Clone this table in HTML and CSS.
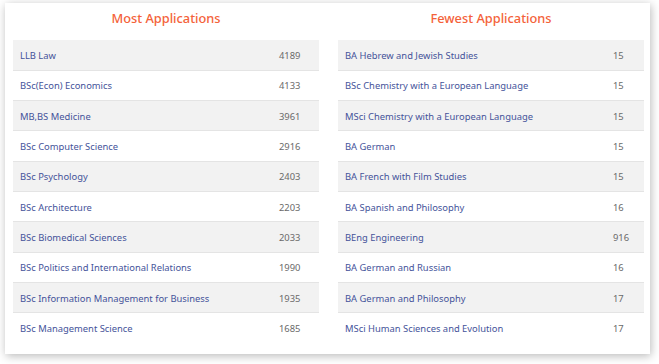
FILE: index.html
```html
<!DOCTYPE html>
<html lang="en">
<head>
    <meta charset="UTF-8">
    <meta name="viewport" content="width=device-width, initial-scale=1.0">
    <title>Applications</title>
    <link rel="stylesheet" href="styles.css">
</head>
<body>
    <div class="card">
        <section class="panel">
            <h2>Most Applications</h2>
            <table class="apps apps-most">
                <tr><td>LLB Law</td><td>4189</td></tr>
                <tr><td>BSc(Econ) Economics</td><td>4133</td></tr>
                <tr><td>MB,BS Medicine</td><td>3961</td></tr>
                <tr><td>BSc Computer Science</td><td>2916</td></tr>
                <tr><td>BSc Psychology</td><td>2403</td></tr>
                <tr><td>BSc Architecture</td><td>2203</td></tr>
                <tr><td>BSc Biomedical Sciences</td><td>2033</td></tr>
                <tr><td>BSc Politics and International Relations</td><td>1990</td></tr>
                <tr><td>BSc Information Management for Business</td><td>1935</td></tr>
                <tr><td>BSc Management Science</td><td>1685</td></tr>
            </table>
        </section>
        <section class="panel">
            <h2>Fewest Applications</h2>
            <table class="apps apps-fewest">
                <tr><td>BA Hebrew and Jewish Studies</td><td>15</td></tr>
                <tr><td>BSc Chemistry with a European Language</td><td>15</td></tr>
                <tr><td>MSci Chemistry with a European Language</td><td>15</td></tr>
                <tr><td>BA German</td><td>15</td></tr>
                <tr><td>BA French with Film Studies</td><td>15</td></tr>
                <tr><td>BA Spanish and Philosophy</td><td>16</td></tr>
                <tr><td>BEng Engineering</td><td>916</td></tr>
                <tr><td>BA German and Russian</td><td>16</td></tr>
                <tr><td>BA German and Philosophy</td><td>17</td></tr>
                <tr><td>MSci Human Sciences and Evolution</td><td>17</td></tr>
            </table>
        </section>
    </div>
</body>
</html>
```

FILE: styles.css
```css
/* base */
* {
    margin: 0;
    padding: 0;
    box-sizing: border-box;
}

body {
    font-family: 'Noto Sans', 'Open Sans', sans-serif;
    background-color: #fff;
    padding: 3px 9px 10px 5px;
}

/* card */
.card {
    display: flex;
    gap: 19px;
    width: 645px;
    height: 351px;
    padding: 0 6px 0 8px;
    background-color: #fff;
    box-shadow: 1px 2px 9px rgba(0, 0, 0, 0.28);
}

.panel {
    width: 306px;
}

.panel h2 {
    height: 37px;
    line-height: 30px;
    text-align: center;
    font-size: 12.8px;
    font-weight: 500;
    color: #f4623a;
}

/* tables */
.apps {
    width: 100%;
    border-collapse: collapse;
    table-layout: fixed;
    font-size: 9.4px;
}

.apps tr {
    height: 30.3px;
}

.apps tr + tr td {
    border-top: 1px solid #e4e4e4;
}

.apps tr:nth-child(odd) {
    background-color: #f2f2f2;
}

.apps td {
    padding: 1px 7px 0;
    vertical-align: middle;
    color: #45539a;
    white-space: nowrap;
}

.apps td:last-child {
    color: #6a6a6a;
}

.apps-most td:last-child {
    width: 47px;
}

.apps-fewest td:last-child {
    width: 38px;
}
```
